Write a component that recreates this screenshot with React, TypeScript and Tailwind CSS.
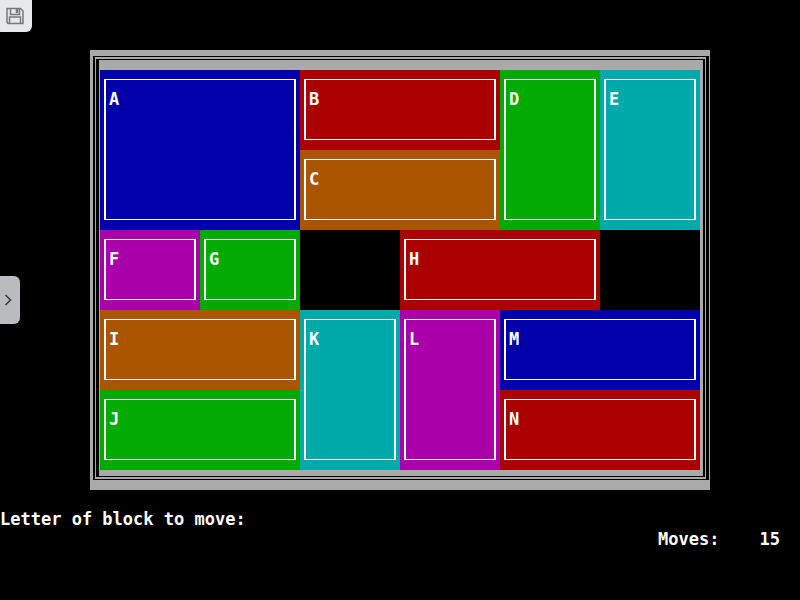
import React from "react";

type Block = { letter: string; area: string; color: string };

const blocks: Block[] = [
  { letter: "A", area: "col-start-1 col-span-2 row-start-1 row-span-2", color: "bg-[#0000aa]" },
  { letter: "B", area: "col-start-3 col-span-2 row-start-1", color: "bg-[#aa0000]" },
  { letter: "C", area: "col-start-3 col-span-2 row-start-2", color: "bg-[#aa5500]" },
  { letter: "D", area: "col-start-5 row-start-1 row-span-2", color: "bg-[#00aa00]" },
  { letter: "E", area: "col-start-6 row-start-1 row-span-2", color: "bg-[#00aaaa]" },
  { letter: "F", area: "col-start-1 row-start-3", color: "bg-[#aa00aa]" },
  { letter: "G", area: "col-start-2 row-start-3", color: "bg-[#00aa00]" },
  { letter: "H", area: "col-start-4 col-span-2 row-start-3", color: "bg-[#aa0000]" },
  { letter: "I", area: "col-start-1 col-span-2 row-start-4", color: "bg-[#aa5500]" },
  { letter: "J", area: "col-start-1 col-span-2 row-start-5", color: "bg-[#00aa00]" },
  { letter: "K", area: "col-start-3 row-start-4 row-span-2", color: "bg-[#00aaaa]" },
  { letter: "L", area: "col-start-4 row-start-4 row-span-2", color: "bg-[#aa00aa]" },
  { letter: "M", area: "col-start-5 col-span-2 row-start-4", color: "bg-[#0000aa]" },
  { letter: "N", area: "col-start-5 col-span-2 row-start-5", color: "bg-[#aa0000]" },
];

function BlockTile({ letter, area, color }: Block) {
  return (
    <div className={`${area} ${color} flex px-1 pt-[9px] pb-[10px]`}>
      <div className="flex-1 border-x-2 border-y border-white px-[3px] pt-[9px]">{letter}</div>
    </div>
  );
}

function Board() {
  return (
    <div className="border-t-[6px] border-r border-b-[10px] border-l-[3px] border-[#aaaaaa] bg-black pt-px pr-[3px] pb-px pl-[2px]">
      <div className="border-x border-y-2 border-[#aaaaaa] bg-black pt-px pr-[2px] pb-px pl-[3px]">
        <div className="border-t-[10px] border-r-[3px] border-b-[6px] border-l border-[#aaaaaa] bg-black">
          <div className="grid auto-rows-[80px] grid-cols-6">
            {blocks.map((b) => (
              <BlockTile key={b.letter} {...b} />
            ))}
          </div>
        </div>
      </div>
    </div>
  );
}

export default function App() {
  return (
    <div className="relative min-h-screen bg-black pt-[50px] font-['DejaVu_Sans_Mono',monospace] text-[17px] leading-5 font-bold text-white">
      <button
        type="button"
        aria-label="Save"
        className="absolute top-0 left-0 flex size-8 items-center justify-center rounded-br-md bg-[#e6e8eb] pr-0.5 text-[#77787a]"
      >
        <svg viewBox="0 0 18 18" className="size-[18px]" fill="none" stroke="currentColor" strokeWidth="1.5">
          <path d="M1 1.5H14.5L17 4V16.5H2L1 15.5Z" />
          <path d="M4.5 1.5V7.5H13.5V1.5" />
          <path d="M3.5 16.5V10H14.5V16.5" />
          <path d="M11 2V6" strokeWidth="2.5" />
        </svg>
      </button>
      <button
        type="button"
        aria-label="Open panel"
        className="absolute top-[276px] left-0 flex h-12 w-5 items-center justify-center rounded-r-md bg-[#b9bbbe] pr-1 text-[#333639]"
      >
        <svg viewBox="0 0 8 12" className="h-3 w-2" fill="none" stroke="currentColor" strokeWidth="1.5">
          <path d="M1.5 1L6.5 6L1.5 11" />
        </svg>
      </button>
      <main className="px-[90px]">
        <Board />
      </main>
      <label htmlFor="move" className="mt-[19px] flex">
        <span className="whitespace-pre">Letter of block to move:</span>
        <input id="move" maxLength={1} className="min-w-0 flex-1 bg-transparent outline-none" />
      </label>
      <p className="flex justify-end gap-10 pr-5">
        <span>Moves:</span>
        <span>15</span>
      </p>
    </div>
  );
}
